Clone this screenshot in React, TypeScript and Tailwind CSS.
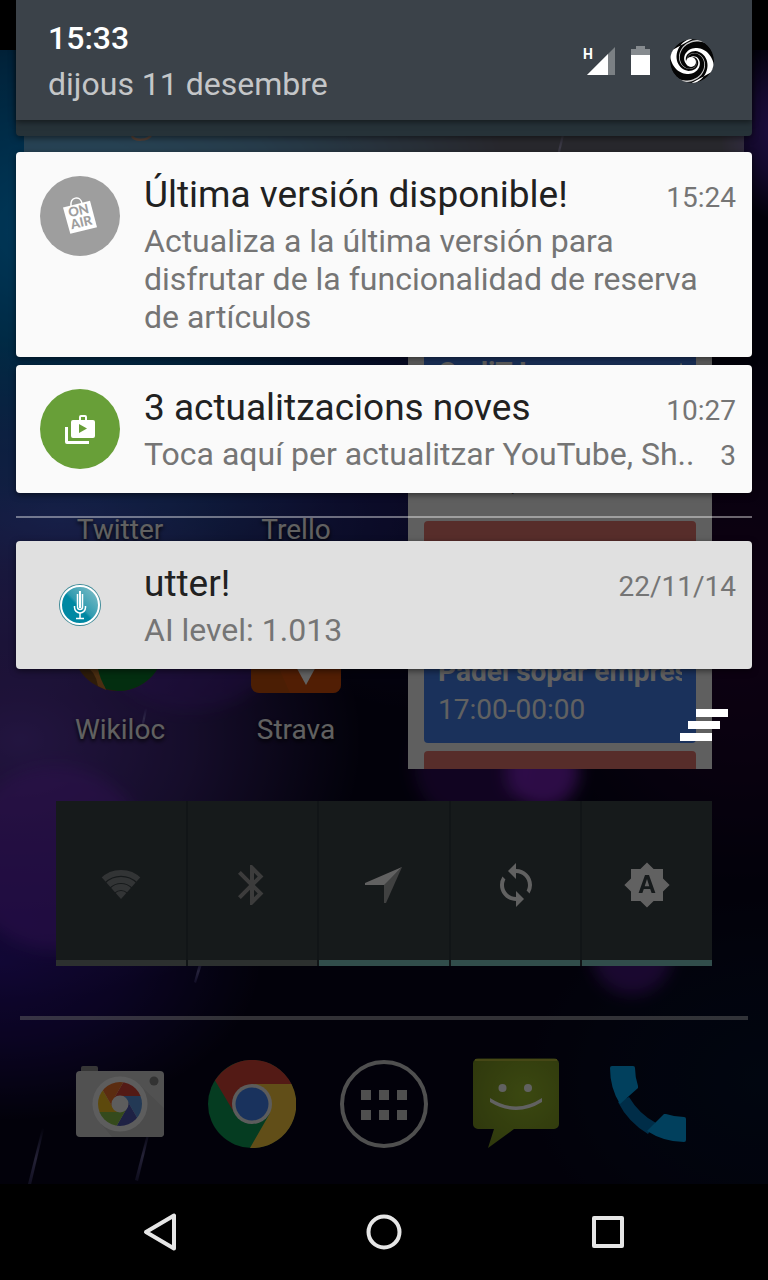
import React from 'react';
import { MdBluetooth, MdBrightnessAuto, MdSync } from 'react-icons/md';

interface Notification {
  id: number;
  title: string;
  body: string;
  time: string;
  count?: string;
  expanded?: boolean;
  icon: React.ReactNode;
}

interface Toggle {
  name: string;
  active: boolean;
  icon: React.ReactNode;
}

// One tapered arm of the avatar swirl, as a closed path around (22, 22)
function swirlArm(start: number, width: number) {
  const outer: string[] = [];
  const inner: string[] = [];
  for (let i = 0; i <= 40; i++) {
    const r = 4 + (i / 40) * 20;
    const angle = start + 3.3 * Math.log(r / 4);
    const half = (width * (0.5 + i / 80)) / 2;
    outer.push(`${22 + r * Math.cos(angle + half)} ${22 + r * Math.sin(angle + half)}`);
    inner.unshift(`${22 + r * Math.cos(angle - half)} ${22 + r * Math.sin(angle - half)}`);
  }
  return `M${outer.concat(inner).join('L')}Z`;
}

function SwirlAvatar() {
  return (
    <svg width="44" height="44" viewBox="0 0 44 44">
      <defs>
        <clipPath id="avatar">
          <circle cx="22" cy="22" r="22" />
        </clipPath>
      </defs>
      <g clipPath="url(#avatar)">
        <circle cx="22" cy="22" r="22" fill="#050505" />
        <path d={swirlArm(-1.7, 1.3)} fill="#fff" />
        <path d={swirlArm(1.44, 1.3)} fill="#fff" />
        <path d={swirlArm(-0.5, 0.3)} fill="#ccc" />
        <path d={swirlArm(2.64, 0.3)} fill="#ccc" />
        <circle cx="21" cy="23" r="5" fill="#fff" />
      </g>
    </svg>
  );
}

function SignalIcon() {
  return (
    <svg width="32" height="30" viewBox="0 0 32 30">
      <text x="0" y="13" fontFamily="Roboto" fontWeight="700" fontSize="14" fill="#fff">H</text>
      <path d="M32 1v28H4z" fill="#7b8084" />
      <path d="M25 8v21H4z" fill="#fff" />
    </svg>
  );
}

function BatteryIcon() {
  return (
    <svg width="19" height="30" viewBox="0 0 19 30">
      <path d="M5 0h9v3h5v7H0V3h5z" fill="#868b8f" />
      <path d="M0 9h19v20H0z" fill="#fff" />
    </svg>
  );
}

function OnAirIcon() {
  return (
    <svg width="80" height="80" viewBox="0 0 80 80">
      <circle cx="40" cy="40" r="40" fill="#9e9e9e" />
      <path d="M31 30c-1-9 9-11 11-3" fill="none" stroke="#fff" strokeWidth="1.5" />
      <path d="M23 31.5 50 24.7l7 26.600-26.700 6.400z" fill="#fff" />
      <g transform="rotate(-13 40 41)" fill="#9e9e9e" fontFamily="Lato" fontWeight="900" fontSize="13">
        <text x="40" y="39" textAnchor="middle">ON</text>
        <text x="40" y="51" textAnchor="middle">AIR</text>
      </g>
    </svg>
  );
}

function StoreIcon() {
  return (
    <svg width="80" height="80" viewBox="0 0 80 80">
      <circle cx="40" cy="40" r="40" fill="#689f38" />
      <path d="M25 38h3v14h21v3H27a2 2 0 0 1-2-2z" fill="#fff" />
      <path
        d="M39 31v-3a2 2 0 0 1 2-2h4a2 2 0 0 1 2 2v3h6a2 2 0 0 1 2 2v14a2 2 0 0 1-2 2H33a2 2 0 0 1-2-2V33a2 2 0 0 1 2-2zm2 0h4v-3h-4zm-2 4v9l8-4.500z"
        fill="#fff"
        fillRule="evenodd"
      />
    </svg>
  );
}

function UtterIcon() {
  return (
    <svg width="80" height="80" viewBox="0 0 80 80">
      <defs>
        <linearGradient id="utter" x1="0" y1="1" x2="1" y2="0">
          <stop offset="0.45" stopColor="#0088a3" />
          <stop offset="0.5" stopColor="#2f9bb0" />
          <stop offset="1" stopColor="#8cc3cb" />
        </linearGradient>
      </defs>
      <circle cx="40" cy="40" r="21" fill="#3f8b98" />
      <circle cx="40" cy="40" r="19" fill="url(#utter)" stroke="#fff" strokeWidth="2" />
      <g fill="none" stroke="#fff">
        <path d="M40 26v17" strokeWidth="2" />
        <path d="M37.500 29v13a2.500 2.500 0 0 0 5 0V29" strokeWidth="1.500" />
        <path d="M34.500 41v1.500a5.500 5.500 0 0 0 11 0V41" strokeWidth="1.500" />
        <path d="M40 48v5M36 53.500h8" strokeWidth="1.500" />
      </g>
    </svg>
  );
}

function WifiIcon() {
  return (
    <svg width="48" height="48" viewBox="0 0 48 48" fill="none" stroke="#84898c">
      <defs>
        <clipPath id="wifi">
          <path d="M24 38 0 11V0h48v11z" />
        </clipPath>
      </defs>
      <g clipPath="url(#wifi)" strokeWidth="5.800">
        <circle cx="24" cy="38" r="26.100" />
        <circle cx="24" cy="38" r="19" />
        <circle cx="24" cy="38" r="12" />
        <circle cx="24" cy="38" r="4" strokeWidth="8" />
      </g>
    </svg>
  );
}

function LocationIcon() {
  return (
    <svg width="48" height="48" viewBox="0 0 48 48">
      <path d="M5 22 42 6 25 24H5z" fill="#fff" />
      <path d="M42 6 26 42h-2V24z" fill="#a8abac" />
    </svg>
  );
}

function CameraIcon() {
  const blades = ['#db4437', '#5c97e0', '#5058b4', '#8bc34a', '#f4c020', '#f0742c'];
  return (
    <svg width="88" height="88" viewBox="0 0 88 88">
      <rect x="5" y="6" width="17" height="10" rx="2" fill="#8f8f8f" />
      <rect y="11" width="88" height="66" rx="4" fill="#d6d6d6" />
      <path d="m64 25 24 23v25a4 4 0 0 1-4 4H36L25 64z" fill="#c8c8c8" />
      <circle cx="78" cy="21" r="4.500" fill="#838383" />
      <circle cx="44" cy="44" r="27.500" fill="#f5f5f5" />
      <defs>
        <clipPath id="lens">
          <circle cx="44" cy="44" r="22" />
        </clipPath>
      </defs>
      <g clipPath="url(#lens)">
        {blades.map((color, i) => (
          <path
            key={color}
            d="M37 40 55 9H80V36H44z"
            fill={color}
            transform={`rotate(${i * 60} 44 44)`}
          />
        ))}
      </g>
      <circle cx="44" cy="44" r="8.500" fill="#f5f5f5" />
    </svg>
  );
}

function ChromeIcon() {
  return (
    <svg width="88" height="88" viewBox="0 0 88 88">
      <circle cx="44" cy="44" r="44" fill="#0f9d58" />
      <path d="M7 20.500A44 44 0 0 1 83.500 24H44L27 54z" fill="#db4437" />
      <path d="M83.500 24A44 44 0 0 1 42 88L61.500 54 44 24z" fill="#ffcd40" />
      <circle cx="44" cy="44" r="20" fill="#f1f1f1" />
      <circle cx="44" cy="44" r="16.500" fill="#4285f4" />
    </svg>
  );
}

function AppsIcon() {
  return (
    <svg width="88" height="88" viewBox="0 0 88 88" fill="#d0d0d0">
      <circle cx="44" cy="44" r="42" fill="none" stroke="#d0d0d0" strokeWidth="4" />
      {[21, 39, 57].map(x => (
        <g key={x}>
          <rect x={x} y="30" width="10" height="10" />
          <rect x={x} y="50" width="10" height="10" />
        </g>
      ))}
    </svg>
  );
}

function MessagingIcon() {
  return (
    <svg width="88" height="88" viewBox="0 0 88 88" className="overflow-visible">
      <defs>
        <radialGradient id="sms" cx="0.6" cy="0.4" r="0.8">
          <stop offset="0" stopColor="#9bbd2c" />
          <stop offset="1" stopColor="#788f22" />
        </radialGradient>
      </defs>
      <path d="M6-1.500h76a5 5 0 0 1 5 5V64a5 5 0 0 1-5 5H42L16 88l6-19H6a5 5 0 0 1-5-5V3.500a5 5 0 0 1 5-5z" fill="url(#sms)" />
      <path d="M3 0h82" stroke="#b9bb3c" strokeWidth="2" />
      <circle cx="30.500" cy="28" r="4" fill="#fff" />
      <circle cx="56" cy="28" r="4" fill="#fff" />
      <path d="M18 38q26 17 52 0v4q-26 16-52 0z" fill="#fff" />
    </svg>
  );
}

function PhoneIcon() {
  return (
    <svg width="88" height="88" viewBox="0 0 88 88">
      <path d="M25 37q10 17 27 26l-8 11Q24 62 14 42z" fill="#0277bd" />
      <path d="M8 6h21q2 0 2 2 0 9 3 18v2L16 44Q6 28 6 8q0-2 2-2z" fill="#03a9f4" />
      <path d="M62 54q9 3 18 3 2 0 2 2v21q0 2-2 2-20 0-37-11l17-17z" fill="#03a9f4" />
    </svg>
  );
}

function WikilocIcon() {
  return (
    <svg width="96" height="96" viewBox="0 0 96 96">
      <circle cx="46" cy="48" r="46" fill="#7a4a1c" />
      <path d="M18 60q12 12 16 33l-8-4Q24 74 10 66z" fill="#c67a2e" />
      <path d="M46 94a46 46 0 0 0 44-60H40q-18 16-14 38 2 10 8 20z" fill="#087a2a" />
    </svg>
  );
}

function StravaIcon() {
  return (
    <svg width="96" height="96" viewBox="0 0 96 96">
      <rect x="3" y="6" width="90" height="90" rx="8" fill="#c4500c" />
      <path d="m26 60 16 36h43a8 8 0 0 0 8-8V40z" fill="#e8500a" fillOpacity="0.500" />
      <path d="M46 66h24L58 88z" fill="#fff" />
    </svg>
  );
}

function Wallpaper() {
  const glows = [
    { id: 'cyan', cx: 60, cy: 230, rx: 460, ry: 340, color: '#0098f0', opacity: 1 },
    { id: 'navy', cx: 60, cy: 520, rx: 460, ry: 180, color: '#3f62d8', opacity: 0.8 },
    { id: 'violet', cx: 20, cy: 740, rx: 340, ry: 260, color: '#6a40c0', opacity: 0.85 },
    { id: 'low', cx: 0, cy: 960, rx: 260, ry: 160, color: '#3a16b0', opacity: 0.7 },
    { id: 'mid', cx: 430, cy: 430, rx: 260, ry: 280, color: '#2a1c90', opacity: 0.5 },
    { id: 'edge', cx: 780, cy: 130, rx: 60, ry: 90, color: '#5a2ac0', opacity: 0.9 },
    { id: 'plum', cx: 740, cy: 620, rx: 200, ry: 260, color: '#3a0040', opacity: 0.6 },
    { id: 'steel', cx: 768, cy: 1080, rx: 240, ry: 180, color: '#04122c', opacity: 0.9 },
  ];
  return (
    <svg
      className="absolute inset-0 h-full w-full"
      viewBox="0 50 768 1134"
      preserveAspectRatio="xMidYMid slice"
      aria-hidden="true"
    >
      <defs>
        {glows.map(g => (
          <radialGradient key={g.id} id={g.id}>
            <stop offset="0" stopColor={g.color} stopOpacity={g.opacity} />
            <stop offset="0.500" stopColor={g.color} stopOpacity={g.opacity * 0.6} />
            <stop offset="1" stopColor={g.color} stopOpacity="0" />
          </radialGradient>
        ))}
        <linearGradient id="streak" x1="0" y1="0" x2="0" y2="1">
          <stop offset="0" stopColor="#9a90ff" stopOpacity="0" />
          <stop offset="0.500" stopColor="#9a90d8" stopOpacity="0.600" />
          <stop offset="1" stopColor="#9a90ff" stopOpacity="0.200" />
        </linearGradient>
        <filter id="soft">
          <feGaussianBlur stdDeviation="8" />
        </filter>
      </defs>
      <rect y="50" width="768" height="1134" fill="#07051c" />
      {glows.map(g => (
        <ellipse key={g.id} cx={g.cx} cy={g.cy} rx={g.rx} ry={g.ry} fill={`url(#${g.id})`} />
      ))}
      <g filter="url(#soft)">
        <circle cx="55" cy="858" r="92" fill="#7a2ad0" fillOpacity="0.500" />
        <ellipse cx="190" cy="650" rx="85" ry="60" fill="#5a28b0" fillOpacity="0.450" />
        <circle cx="472" cy="765" r="58" fill="#4a1080" fillOpacity="0.600" />
        <circle cx="543" cy="772" r="36" fill="#8a26d4" fillOpacity="0.850" />
        <circle cx="632" cy="955" r="40" fill="#4c1888" fillOpacity="0.900" />
      </g>
      <g fill="url(#streak)">
        <path d="M200 960l3 1-7 22-2-1z" />
        <path d="M145 708l2 1-4 20-2-1z" />
        <path d="M563 130l2 1-8 34-2-1z" />
        <path d="M42 1128l2 1-14 60-3-1z" />
        <path d="M148 1130l2 1-12 50-3-1z" />
      </g>
    </svg>
  );
}

function CalendarEvent({ title, time }: { title: string; time: string }) {
  return (
    <div className="shrink-0 rounded bg-[#4481f0] p-3.5 text-white">
      <p className="overflow-hidden font-bold whitespace-nowrap">{title}</p>
      <p>{time}</p>
    </div>
  );
}

function CalendarWidget() {
  return (
    <div className="flex h-full flex-col gap-2 overflow-hidden bg-[#fafafa] px-4 pt-[171px] text-[28px] leading-[38px]">
      <CalendarEvent title="CodiT Lua recurrent" time="09:00-10:00" />
      <p className="my-2.5 h-[41px] shrink-0 px-3.5 whitespace-nowrap text-[#333]">Demà, 12 des.</p>
      <div className="h-[110px] shrink-0 rounded bg-[#e5766e]" />
      <CalendarEvent title="Padel sopar empresa" time="17:00-00:00" />
      <div className="h-[110px] shrink-0 rounded bg-[#e5766e]" />
    </div>
  );
}

function AppShortcut({ label, icon }: { label: string; icon?: React.ReactNode }) {
  return (
    <button className="flex h-[200px] flex-col items-center justify-end gap-5 pb-[22px] text-[28px] leading-[34px] text-white [text-shadow:0_2px_4px_#000]">
      {icon}
      <span>{label}</span>
    </button>
  );
}

const toggles: Toggle[] = [
  { name: 'Wi-Fi', active: false, icon: <WifiIcon /> },
  { name: 'Bluetooth', active: false, icon: <MdBluetooth className="size-12 text-[#9e9e9e]" /> },
  { name: 'Location', active: true, icon: <LocationIcon /> },
  { name: 'Sync', active: true, icon: <MdSync className="size-12" /> },
  { name: 'Brightness', active: true, icon: <MdBrightnessAuto className="size-12" /> },
];

const dock = [
  { name: 'Camera', icon: <CameraIcon /> },
  { name: 'Chrome', icon: <ChromeIcon /> },
  { name: 'Apps', icon: <AppsIcon /> },
  { name: 'Messaging', icon: <MessagingIcon /> },
  { name: 'Phone', icon: <PhoneIcon /> },
];

const notifications: Notification[] = [
  {
    id: 1,
    title: 'Última versión disponible!',
    body: 'Actualiza a la última versión para disfrutar de la funcionalidad de reserva de artículos',
    time: '15:24',
    expanded: true,
    icon: <OnAirIcon />,
  },
  {
    id: 2,
    title: '3 actualitzacions noves',
    body: 'Toca aquí per actualitzar YouTube, Sh..',
    time: '10:27',
    count: '3',
    icon: <StoreIcon />,
  },
];

function NotificationCard({ item, muted }: { item: Notification; muted?: boolean }) {
  return (
    <article
      className={`flex gap-6 rounded pt-[22px] pr-4 pl-6 shadow-[0_2px_6px_rgba(0,0,0,0.5)] ${
        muted ? 'bg-[#e0e0e0]' : 'bg-[#fafafa]'
      } ${item.expanded ? 'pb-[21px]' : 'pb-5'}`}
    >
      <div className="mt-0.5 h-20 w-20 shrink-0">{item.icon}</div>
      <div className="min-w-0 flex-1">
        <div className="flex items-baseline justify-between">
          <h2 className="text-[37px] leading-[42px] text-[#212121]">{item.title}</h2>
          <time className="text-[28px] leading-[32px] text-[#757575]">{item.time}</time>
        </div>
        <div className="mt-1.5 flex items-baseline justify-between text-[32px] leading-[38px] text-[#757575]">
          <p className={item.expanded ? '' : 'whitespace-nowrap'}>{item.body}</p>
          {item.count && <span className="text-[28px] leading-[32px]">{item.count}</span>}
        </div>
      </div>
    </article>
  );
}

function Launcher() {
  return (
    <main className="relative mt-[50px] flex-1 overflow-hidden">
      <Wallpaper />
      <div className="relative">
        <div className="px-6 pt-4 pb-[11px]">
          <div className="flex h-[92px] items-start bg-white/40 pt-[70px] pl-[106px]">
            <svg width="24" height="10" viewBox="0 0 24 10">
              <path d="M2 0c2 5 16 5 19-1" fill="none" stroke="#d8a890" strokeWidth="2.500" />
            </svg>
          </div>
        </div>

        <div className="grid h-[600px] grid-cols-4 px-8">
          <div className="col-span-2 grid grid-cols-2 content-end">
            <AppShortcut label="Twitter" />
            <AppShortcut label="Trello" />
            <AppShortcut label="Wikiloc" icon={<WikilocIcon />} />
            <AppShortcut label="Strava" icon={<StravaIcon />} />
          </div>
          <div className="col-span-2 h-full min-h-0 px-6">
            <CalendarWidget />
          </div>
        </div>

        {/* Power control widget */}
        <div className="mx-14 mt-8 grid grid-cols-5 gap-0.5 bg-[#2f383d]">
          {toggles.map(toggle => (
            <button
              key={toggle.name}
              aria-label={toggle.name}
              className={`flex justify-center border-b-[6px] bg-[#3c4448] pt-[60px] pb-[51px] text-white ${
                toggle.active ? 'border-[#80cbc4]' : 'border-[#747e7c]'
              }`}
            >
              {toggle.icon}
            </button>
          ))}
        </div>

        <div className="mx-5 mt-[50px] h-1 bg-white/50" />

        <div className="grid grid-cols-5 px-[54px] pt-10 pb-9">
          {dock.map(app => (
            <button key={app.name} aria-label={app.name} className="flex justify-center">
              {app.icon}
            </button>
          ))}
        </div>
      </div>
      <div className="absolute inset-0 bg-black/62" />
    </main>
  );
}

function NotificationShade() {
  return (
    <div className="absolute inset-x-0 top-0 px-4">
      <div className="rounded-b bg-[#263238] pb-4 shadow-[0_2px_6px_rgba(0,0,0,0.5)]">
        <header className="flex items-center justify-between bg-[#3b4249] pt-[19px] pr-[38px] pb-[17px] pl-8 shadow-[0_2px_6px_rgba(0,0,0,0.5)]">
          <div className="flex flex-col gap-2 text-[32px] leading-[38px]">
            <time className="font-medium text-white">15:33</time>
            <span className="text-[#c4c6c8]">dijous 11 desembre</span>
          </div>
          <div className="flex items-center">
            <SignalIcon />
            <span className="mr-5 ml-4">
              <BatteryIcon />
            </span>
            <SwirlAvatar />
          </div>
        </header>
      </div>

      <section className="mt-4 flex flex-col gap-2">
        {notifications.map(item => (
          <NotificationCard key={item.id} item={item} />
        ))}
      </section>

      <div className="my-[23px] h-0.5 bg-white/40" />

      <NotificationCard
        muted
        item={{ id: 3, title: 'utter!', body: 'AI level: 1.013', time: '22/11/14', icon: <UtterIcon /> }}
      />

      <div className="mt-10 flex justify-end pr-6">
        <button aria-label="Clear all notifications">
          <svg width="48" height="32" viewBox="0 0 48 32" fill="#fff">
            <path d="M16 0h32v8H16zM8 12h32v8H8zM0 24h32v8H0z" />
          </svg>
        </button>
      </div>
    </div>
  );
}

function NavigationBar() {
  return (
    <nav className="grid h-24 grid-cols-3 place-items-center bg-black px-12">
      <button aria-label="Back">
        <svg width="48" height="48" viewBox="0 0 48 48" fill="none" stroke="#e6e6e6" strokeWidth="4" strokeLinejoin="round">
          <path d="M38 7.500v33L10 24z" />
        </svg>
      </button>
      <button aria-label="Home">
        <svg width="48" height="48" viewBox="0 0 48 48" fill="none" stroke="#e6e6e6" strokeWidth="4">
          <circle cx="24" cy="24" r="15.500" />
        </svg>
      </button>
      <button aria-label="Recent apps">
        <svg width="48" height="48" viewBox="0 0 48 48" fill="none" stroke="#e6e6e6" strokeWidth="4" strokeLinejoin="round">
          <rect x="10" y="10" width="28" height="28" />
        </svg>
      </button>
    </nav>
  );
}

export default function App() {
  return (
    <div className="relative flex min-h-screen flex-col bg-black font-[Roboto,sans-serif]">
      <Launcher />
      <NavigationBar />
      <NotificationShade />
    </div>
  );
}
